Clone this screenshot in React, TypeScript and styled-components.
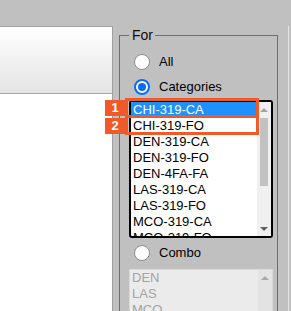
import React from "react";
import styled, { createGlobalStyle } from "styled-components";

const Global = createGlobalStyle`
  html, body { margin: 0; padding: 0; background: #c0c0c0; }
  body { font-family: "Liberation Sans", Arial, sans-serif; font-size: 13px; color: #000; overflow: hidden; }
`;

const Page = styled.div`
  display: flex;
  align-items: flex-start;
  width: 291px;
  height: 311px;
  padding-top: 26px;
  box-sizing: border-box;
  overflow: hidden;
`;

const LeftPanel = styled.div`
  width: 113px;
  height: 285px;
  flex: none;
  background: #fff;
  border-top: 1px solid #a8a8a8;
  border-right: 1px solid #a0a0a0;
  box-sizing: border-box;
  display: flex;
  flex-direction: column;
`;

const PanelHeader = styled.div`
  height: 66px;
  background: linear-gradient(#ffffff, #e4e4e4);
  border-bottom: 1px solid #a8a8a8;
`;

const RightArea = styled.div`
  position: relative;
  flex: none;
  padding-left: 6px;
  width: 176px;
  height: 285px;
  box-sizing: border-box;
  border-right: 1px solid #e6e6e6;
`;

const Fieldset = styled.fieldset`
  margin: 1px 0 0 0;
  padding: 0 0 0 8px;
  width: 159px;
  height: 300px;
  box-sizing: border-box;
  border: 1px solid #6e6e6e;
  border-bottom: none;
`;

const Legend = styled.legend`
  padding: 0 2px 0 3px;
  margin-left: 1px;
  font-size: 14px;
  line-height: 16px;
  color: #1a0a00;
`;

const RadioRow = styled.div<{ $mt?: number }>`
  display: flex;
  align-items: center;
  height: 18px;
  margin-top: ${(p) => p.$mt ?? 0}px;
  margin-left: 6px;
  gap: 9px;
`;

const Radio = styled.span<{ $checked?: boolean }>`
  width: 16px;
  height: 16px;
  box-sizing: border-box;
  border-radius: 50%;
  background: #fff;
  border: ${(p) => (p.$checked ? "2px solid #0a6cf5" : "1px solid #8c8c8c")};
  display: flex;
  align-items: center;
  justify-content: center;
  &::after {
    content: "";
    display: ${(p) => (p.$checked ? "block" : "none")};
    width: 8px;
    height: 8px;
    border-radius: 50%;
    background: #0a6cf5;
  }
`;

const RadioLabel = styled.span`
  font-size: 13px;
  line-height: 16px;
`;

const ListBox = styled.div<{ $disabled?: boolean }>`
  position: relative;
  margin-top: ${(p) => (p.$disabled ? 7 : 4)}px;
  margin-left: 1px;
  width: 144px;
  height: ${(p) => (p.$disabled ? 60 : 138)}px;
  box-sizing: border-box;
  border: ${(p) => (p.$disabled ? "1px solid #dadada" : "2px solid #000")};
  border-radius: ${(p) => (p.$disabled ? 0 : 3)}px;
  background: ${(p) => (p.$disabled ? "#ebebeb" : "#fff")};
  display: flex;
  overflow: hidden;
`;

const Items = styled.div`
  flex: 1;
  overflow: hidden;
`;

const Item = styled.div<{ $selected?: boolean; $disabled?: boolean }>`
  height: 16px;
  line-height: 16px;
  padding-left: 2px;
  font-size: 13px;
  white-space: nowrap;
  background: ${(p) => (p.$selected ? "#1e90ff" : "transparent")};
  color: ${(p) => (p.$selected ? "#fff" : p.$disabled ? "#a3a3a3" : "#000")};
`;

const Scrollbar = styled.div<{ $disabled?: boolean }>`
  width: 14px;
  flex: none;
  background: ${(p) => (p.$disabled ? "#e3e3e3" : "#f0f0f0")};
  display: flex;
  flex-direction: column;
  align-items: center;
`;

const Arrow = styled.div<{ $down?: boolean; $color: string }>`
  height: 15px;
  width: 14px;
  flex: none;
  display: flex;
  align-items: center;
  justify-content: center;
  &::before {
    content: "";
    width: 0;
    height: 0;
    border-left: 4px solid transparent;
    border-right: 4px solid transparent;
    ${(p) =>
      p.$down
        ? `border-top: 4px solid ${p.$color};`
        : `border-bottom: 4px solid ${p.$color};`}
  }
`;

const Track = styled.div`
  flex: 1;
  width: 100%;
  display: flex;
  justify-content: center;
`;

const Thumb = styled.div`
  margin-top: 1px;
  width: 8px;
  height: 68px;
  background: #c1c1c1;
`;

const Badge = styled.div<{ $top: number }>`
  position: absolute;
  left: 105px;
  top: ${(p) => p.$top}px;
  width: 20px;
  height: 16px;
  background: #f05a28;
  color: #fff;
  font-weight: bold;
  font-size: 13px;
  line-height: 16px;
  text-align: center;
`;

const Highlight = styled.div<{ $top: number }>`
  position: absolute;
  left: 125px;
  top: ${(p) => p.$top}px;
  width: 134px;
  height: 20px;
  box-sizing: border-box;
  border: 3px solid #f05a28;
`;

const Overlay = styled.div`
  position: absolute;
  left: 0;
  top: 0;
  width: 291px;
  height: 311px;
  pointer-events: none;
`;

const categories = [
  "CHI-319-CA",
  "CHI-319-FO",
  "DEN-319-CA",
  "DEN-319-FO",
  "DEN-4FA-FA",
  "LAS-319-CA",
  "LAS-319-FO",
  "MCO-319-CA",
  "MCO-319-FO",
];

const combos = ["DEN", "LAS", "MCO", "ORD"];

export default function App() {
  return (
    <>
      <Global />
      <Page>
        <LeftPanel>
          <PanelHeader />
        </LeftPanel>
        <RightArea>
          <Fieldset>
            <Legend>For</Legend>
            <RadioRow $mt={10}>
              <Radio />
              <RadioLabel>All</RadioLabel>
            </RadioRow>
            <RadioRow $mt={7}>
              <Radio $checked />
              <RadioLabel>Categories</RadioLabel>
            </RadioRow>
            <ListBox>
              <Items>
                {categories.map((c, i) => (
                  <Item key={c} $selected={i === 0}>
                    {c}
                  </Item>
                ))}
              </Items>
              <Scrollbar>
                <Arrow $color="#a3a3a3" />
                <Track>
                  <Thumb />
                </Track>
                <Arrow $down $color="#606060" />
              </Scrollbar>
            </ListBox>
            <RadioRow $mt={6}>
              <Radio />
              <RadioLabel>Combo</RadioLabel>
            </RadioRow>
            <ListBox $disabled>
              <Items>
                {combos.map((c) => (
                  <Item key={c} $disabled>
                    {c}
                  </Item>
                ))}
              </Items>
              <Scrollbar $disabled>
                <Arrow $color="#a8a8a8" />
              </Scrollbar>
            </ListBox>
          </Fieldset>
        </RightArea>
      </Page>
      <Overlay>
        <Badge $top={100}>1</Badge>
        <Highlight $top={98} />
        <Badge $top={118}>2</Badge>
        <Highlight $top={115} />
      </Overlay>
    </>
  );
}
